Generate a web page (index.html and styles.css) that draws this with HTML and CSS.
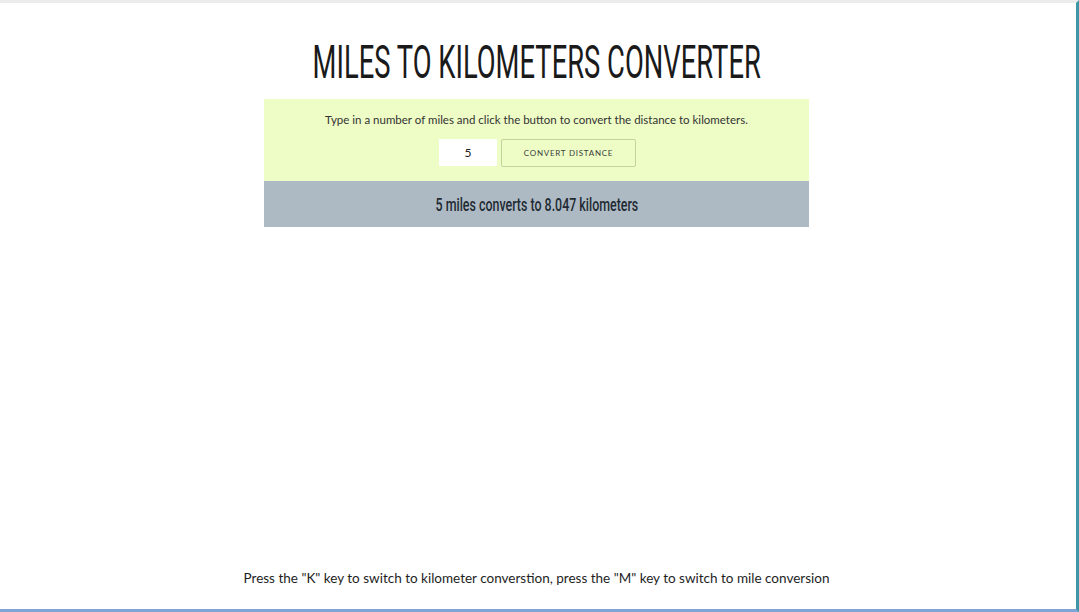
FILE: index.html
```html
<!DOCTYPE html>
<html>
<head>
<meta charset="utf-8">
<link rel="stylesheet" href="styles.css">
</head>
<body>
<div class="page">
  <h1 class="title"><span class="narrow">MILES TO KILOMETERS CONVERTER</span></h1>
  <div class="panel">
    <div class="form-area">
      <p class="intro">Type in a number of miles and click the button to convert the distance to kilometers.</p>
      <div class="controls">
        <input class="miles-input" type="text" value="5">
        <button class="convert-btn">CONVERT DISTANCE</button>
      </div>
    </div>
    <div class="result"><span class="narrow result-text">5 miles converts to 8.047 kilometers</span></div>
  </div>
  <div class="spacer"></div>
  <p class="footer-note">Press the "K" key to switch to kilometer converstion, press the "M" key to switch to mile conversion</p>
</div>
</body>
</html>
```
FILE: styles.css
```css
html, body {
  margin: 0;
  padding: 0;
  background: #ffffff;
}
.page {
  box-sizing: border-box;
  height: 612px;
  border-top: 3px solid #ececec;
  border-right: 3px solid #3d97a6;
  border-bottom: 3px solid #7fa5d6;
  padding-right: 3px;
  display: flex;
  flex-direction: column;
  align-items: center;
  font-family: Lato, "Open Sans", sans-serif;
  color: #2a2a2a;
}
.narrow {
  display: inline-block;
  transform-origin: center center;
}
.title {
  margin: 32px 0 0 0;
  font-family: Roboto, sans-serif;
  font-weight: 400;
  font-size: 46px;
  line-height: 54px;
  color: #1a1a1a;
  white-space: nowrap;
}
.title .narrow {
  transform: scaleX(0.595);
}
.panel {
  margin-top: 10px;
  width: 545px;
  display: flex;
  flex-direction: column;
}
.form-area {
  background: #eefcc6;
  height: 82px;
  display: flex;
  flex-direction: column;
  align-items: center;
  box-sizing: border-box;
  padding-top: 14px;
}
.intro {
  margin: 0;
  font-size: 11.5px;
  line-height: 14px;
  color: #333;
}
.controls {
  margin-top: 12px;
  display: flex;
  gap: 4px;
  margin-left: 2px;
}
.miles-input {
  box-sizing: border-box;
  width: 58px;
  height: 27px;
  border: none;
  background: #ffffff;
  text-align: center;
  font-family: Lato, sans-serif;
  font-weight: 400;
  font-size: 12px;
  color: #222;
  padding: 0;
  outline: none;
}
.convert-btn {
  box-sizing: border-box;
  width: 135px;
  height: 28px;
  border: 1.5px solid #c4d39a;
  border-radius: 2px;
  background: #eefcc6;
  font-family: Lato, sans-serif;
  font-size: 8px;
  letter-spacing: 0.75px;
  color: #3c3c3c;
  padding: 0;
}
.result {
  background: #adbac4;
  height: 46px;
  display: flex;
  align-items: center;
  justify-content: center;
  font-family: Roboto, sans-serif;
  font-weight: 500;
  font-size: 18px;
  color: #1f2a33;
  white-space: nowrap;
}
.result-text {
  transform: scaleX(0.69);
}
.spacer {
  flex: 1;
}
.footer-note {
  margin: 0 0 22px 0;
  font-size: 13.5px;
  line-height: 18px;
  color: #1e1e1e;
}
```
